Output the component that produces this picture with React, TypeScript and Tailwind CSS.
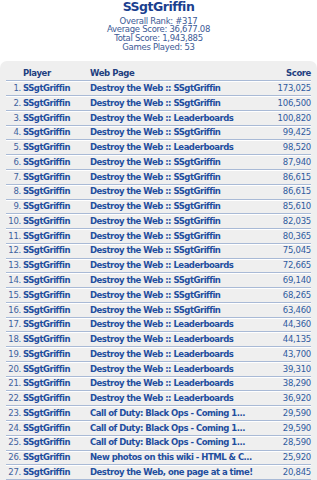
import React from "react";

const rows: [string, string][] = [
  ["Destroy the Web :: SSgtGriffin", "173,025"],
  ["Destroy the Web :: SSgtGriffin", "106,500"],
  ["Destroy the Web :: Leaderboards", "100,820"],
  ["Destroy the Web :: SSgtGriffin", "99,425"],
  ["Destroy the Web :: Leaderboards", "98,520"],
  ["Destroy the Web :: SSgtGriffin", "87,940"],
  ["Destroy the Web :: SSgtGriffin", "86,615"],
  ["Destroy the Web :: SSgtGriffin", "86,615"],
  ["Destroy the Web :: SSgtGriffin", "85,610"],
  ["Destroy the Web :: SSgtGriffin", "82,035"],
  ["Destroy the Web :: SSgtGriffin", "80,365"],
  ["Destroy the Web :: SSgtGriffin", "75,045"],
  ["Destroy the Web :: Leaderboards", "72,665"],
  ["Destroy the Web :: SSgtGriffin", "69,140"],
  ["Destroy the Web :: SSgtGriffin", "68,265"],
  ["Destroy the Web :: SSgtGriffin", "63,460"],
  ["Destroy the Web :: Leaderboards", "44,360"],
  ["Destroy the Web :: Leaderboards", "44,135"],
  ["Destroy the Web :: Leaderboards", "43,700"],
  ["Destroy the Web :: Leaderboards", "39,310"],
  ["Destroy the Web :: Leaderboards", "38,290"],
  ["Destroy the Web :: Leaderboards", "36,920"],
  ["Call of Duty: Black Ops - Coming 1...", "29,590"],
  ["Call of Duty: Black Ops - Coming 1...", "29,590"],
  ["Call of Duty: Black Ops - Coming 1...", "28,590"],
  ["New photos on this wiki - HTML & C...", "25,920"],
  ["Destroy the Web, one page at a time!", "20,845"],
];

export default function App() {
  return (
    <div className="w-[317px] h-[480px] overflow-hidden bg-white font-['DejaVu_Sans',sans-serif] flex flex-col">
      <div className="text-center text-[12.5px] font-bold leading-[13px] tracking-[-0.5px] text-[#1b3f8f]">SSgtGriffin</div>
      <div className="mt-[3.5px] text-center text-[8.5px] leading-[8.9px] tracking-[-0.3px] text-[#3c5a96]">
        <div>Overall Rank: #317</div>
        <div>Average Score: 36,677.08</div>
        <div>Total Score: 1,943,885</div>
        <div>Games Played: 53</div>
      </div>
      <div className="mt-[9px] flex-1 rounded-t-[7px] bg-[#efefef] px-[6px] pt-[5.6px]">
        <div className="flex h-[14.7px] items-center border-b border-[#a9bad6] shadow-[0_1px_0_#ffffff] text-[8.5px] font-bold leading-none tracking-[-0.4px] text-[#1f3f80]">
          <div className="w-[17px]" />
          <div className="w-[67px]">Player</div>
          <div className="flex-1">Web Page</div>
          <div className="text-right">Score</div>
        </div>
        {rows.map(([page, score], i) => (
          <div
            key={i}
            className="flex h-[14.77px] items-center border-b border-[#a9bad6] shadow-[0_1px_0_#ffffff] leading-none"
          >
            <div className="w-[15px] text-right text-[8.5px] tracking-[-0.25px] text-[#3f629e]">{i + 1}.</div>
            <div className="ml-[2px] w-[67px] text-[8.5px] font-bold tracking-[-0.5px] text-[#1f4e9e]">SSgtGriffin</div>
            <div className="flex-1 whitespace-nowrap text-[8.5px] font-bold tracking-[-0.5px] text-[#1f4e9e]">{page}</div>
            <div className="text-right text-[8.5px] tracking-[-0.25px] text-[#2f5b9f]">{score}</div>
          </div>
        ))}
      </div>
    </div>
  );
}
